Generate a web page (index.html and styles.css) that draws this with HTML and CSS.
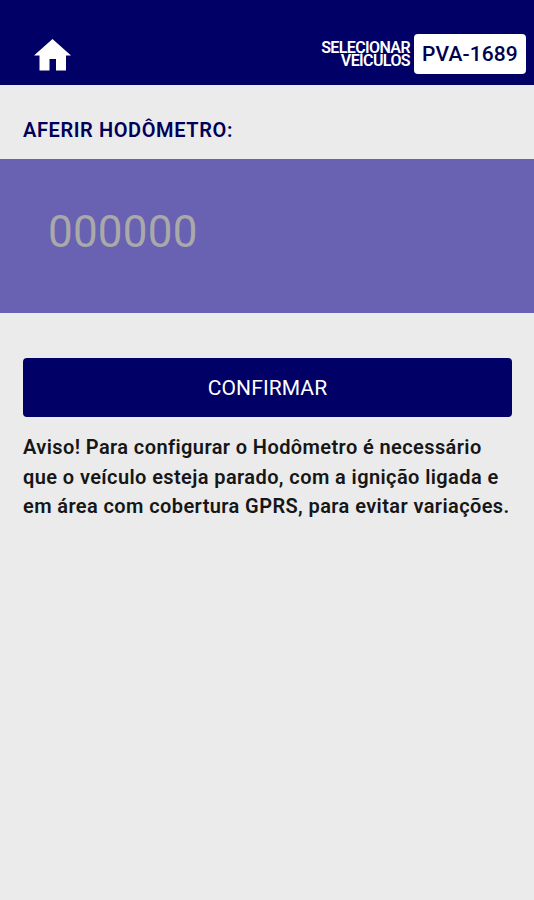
FILE: index.html
```html
<!DOCTYPE html>
<html lang="pt-BR">
<head>
<meta charset="utf-8">
<title>Aferir Hodômetro</title>
<link rel="stylesheet" href="styles.css">
</head>

<body>
<header class="topbar">
  <a class="home" aria-label="Início">
    <svg width="37" height="32" viewBox="0 0 37 32"><path fill="#fff" d="M18.5 0L0 16.5h5.5v15h10V20H22v11.5h10v-15h5z"/></svg>
  </a>
  <div class="vehicle">
    <span class="vehicle-label">SELECIONAR<br>VEÍCULOS</span>
    <span class="plate">PVA-1689</span>
  </div>
</header>

<h1>AFERIR HODÔMETRO:</h1>

<div class="odometer"><span class="odometer-value">000000</span></div>

<div class="content">
  <button class="confirm">CONFIRMAR</button>
  <p class="notice">Aviso! Para configurar o Hodômetro é necessário<br>
  que o veículo esteja parado, com a ignição ligada e<br>
  em área com cobertura GPRS, para evitar variações.</p>
</div>
</body>
</html>
```

FILE: styles.css
```css
body {
  margin: 0;
  background: #ebebeb;
  font-family: Roboto, sans-serif;
}

.topbar {
  display: flex;
  justify-content: space-between;
  align-items: flex-start;
  box-sizing: border-box;
  height: 85px;
  padding: 34px 8px 0 34px;
  background: #000066;
}

.home {
  padding-top: 5px;
}

.home svg {
  display: block;
}

.vehicle {
  display: flex;
  align-items: center;
  gap: 4px;
}

.vehicle-label {
  color: #fff;
  font-size: 16px;
  font-weight: 600;
  line-height: 13px;
  letter-spacing: -0.6px;
  text-align: right;
}

.plate {
  box-sizing: border-box;
  width: 112px;
  height: 40px;
  border-radius: 4px;
  background: #fff;
  color: #000050;
  font-size: 21px;
  font-weight: 500;
  line-height: 41px;
  text-align: center;
  letter-spacing: 0.1px;
}

h1 {
  margin: 0;
  padding-left: 23px;
  height: 74px;
  line-height: 90px;
  color: #000059;
  font-size: 20px;
  font-weight: 600;
  letter-spacing: 0.6px;
}

.odometer {
  box-sizing: border-box;
  height: 154px;
  padding: 47px 0 0 48px;
  background: #6961b1;
}

.odometer-value {
  color: #a9a9a9;
  font-size: 44px;
  line-height: 52px;
  letter-spacing: 0.2px;
}

.content {
  padding: 45px 22px 0 23px;
}

.confirm {
  display: block;
  width: 100%;
  height: 59px;
  border: none;
  border-radius: 4px;
  background: #000066;
  color: #fff;
  font-family: inherit;
  font-size: 21px;
  letter-spacing: 0.1px;
}

.notice {
  margin: 16px 0 0;
  color: #161616;
  font-size: 20px;
  font-weight: 600;
  line-height: 29.7px;
  letter-spacing: 0.4px;
  white-space: nowrap;
}
```
